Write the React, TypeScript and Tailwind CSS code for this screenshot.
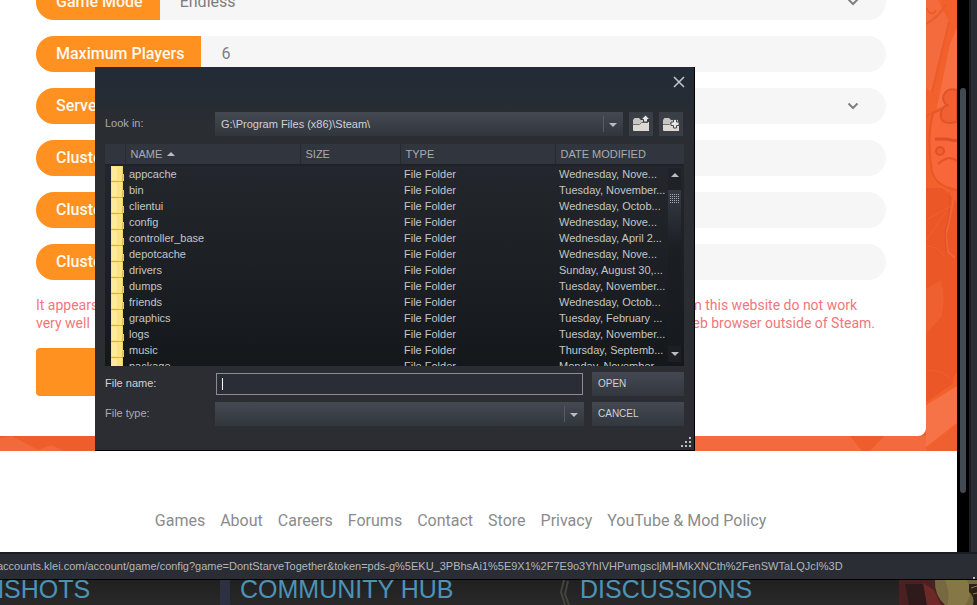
import { useId } from "react";

const files: [string, string][] = [
  ["appcache", "Wednesday, Nove..."],
  ["bin", "Tuesday, November..."],
  ["clientui", "Wednesday, Octob..."],
  ["config", "Wednesday, Nove..."],
  ["controller_base", "Wednesday, April 2..."],
  ["depotcache", "Wednesday, Nove..."],
  ["drivers", "Sunday, August 30,..."],
  ["dumps", "Tuesday, November..."],
  ["friends", "Wednesday, Octob..."],
  ["graphics", "Tuesday, February ..."],
  ["logs", "Tuesday, November..."],
  ["music", "Thursday, Septemb..."],
  ["package", "Monday, November..."],
];

const links = ["Games", "About", "Careers", "Forums", "Contact", "Store", "Privacy", "YouTube & Mod Policy"];

function Arrow({ up = false }: { up?: boolean }) {
  return (
    <svg width="8" height="4" viewBox="0 0 8 4" className="shrink-0" aria-hidden="true">
      <path d={up ? "M0 4L4 0L8 4Z" : "M0 0H8L4 4Z"} fill="#b9bcc2" />
    </svg>
  );
}

function FolderIcon() {
  return (
    <svg width="13" height="16" viewBox="0 0 13 16" className="block" aria-hidden="true">
      <path d="M0 0H12V8H13V15H12V16H0Z" fill="#f0d06c" />
      <path d="M0 0H11V15H0Z" fill="#fbe283" />
      <path d="M1 1H6V14H1Z" fill="#fdea9a" />
      <path d="M0 15.500H12" stroke="#d9b24c" fill="none" />
      <path d="M11.500 15V9" stroke="#e0bb52" fill="none" />
    </svg>
  );
}

function PanelFolder({ kind }: { kind: "up" | "new" }) {
  return (
    <svg width="20" height="20" viewBox="0 0 20 20" aria-hidden="true">
      <path d="M2 6L3.500 4H8L10 6H17V17H3L2 16Z" fill="#c9c5bf" />
      <path d="M2 10H8L10 8H18V17H3L2 16Z" fill="#dcd9d5" />
      <path d="M2 10.500H8.500L10.500 8.500H17" stroke="#776f69" fill="none" />
      {kind === "up" ? (
        <path d="M14.500 1L19 5.500H16.500V8H12.500V5.500H10Z" fill="#e6e6e6" stroke="#343a42" />
      ) : (
        <path d="M12.500 5.500H15.500V8H18V11.500H15.500V14H12.500V11.500H10V8H12.500Z" fill="#e6e6e6" stroke="#45484c" />
      )}
    </svg>
  );
}

function Field({ label, value = "", select = false }: { label: string; value?: string; select?: boolean }) {
  const id = useId();
  return (
    <div className="relative flex h-9 overflow-hidden rounded-full bg-[#f6f6f6] text-base text-[#7d7d7d]">
      <label htmlFor={id} className="flex shrink-0 items-center bg-[#ff9120] pr-[17px] pl-5 font-medium text-[#fff8ee]">
        {label}
      </label>
      {select ? (
        <>
          <select id={id} className="min-w-0 flex-1 appearance-none bg-transparent px-5 outline-none">
            <option>{value}</option>
          </select>
          <svg width="12" height="8" viewBox="0 0 12 8" className="pointer-events-none absolute top-[14px] right-[27px]" aria-hidden="true">
            <path d="M1.500 1.500L6 6L10.500 1.500" fill="none" stroke="#808080" strokeWidth="2" />
          </svg>
        </>
      ) : (
        <input id={id} defaultValue={value} className="min-w-0 flex-1 bg-transparent px-5 outline-none" />
      )}
    </div>
  );
}

function BannerArt() {
  return (
    <>
      <svg viewBox="0 0 31 451" className="absolute top-0 right-0 h-full w-[31px]" preserveAspectRatio="none" aria-hidden="true">
        <rect width="31" height="451" fill="#f2602c" />
        <path d="M0 0H12L23 22L5 92L0 88Z" fill="#f46c3d" />
        <path d="M31 28L24 44L10 112L31 150Z" fill="#f77044" />
        <path d="M0 8Q6 18 10 10M0 24Q14 16 20 4M23 22L6 92M0 116L16 108" stroke="#ec5c2b" strokeWidth="2" fill="none" />
        <path d="M0 188L16 188L31 202V372Q26 378 27 384L0 402Z" fill="#eb5726" />
        <path d="M7 113Q1 136 5 165Q6 186 31 190V120L16 111Z" fill="#f7673a" />
        <path d="M31 190Q6 186 5 165Q1 136 7 113L16 109" fill="none" stroke="#e55829" strokeWidth="2" />
        <path d="M31 90Q19 87 17 98Q18 104 21 105Q14 108 15 118Q17 125 31 122Z" fill="#f26031" stroke="#e05429" strokeWidth="2" />
        <path d="M9 139H20L31 141" stroke="#dd4f27" strokeWidth="3" fill="none" />
        <circle cx="14" cy="151" r="4" fill="#f0602f" stroke="#df5128" strokeWidth="2" />
        <path d="M12 164Q23 154 31 161" stroke="#e2552a" strokeWidth="2" fill="none" />
        <path d="M29 192Q24 218 20 235L22 252L29 258" stroke="#f26436" strokeWidth="2" fill="none" />
        <path d="M23 192Q25 218 19 230L20 252" stroke="#df5426" fill="none" />
        <path d="M0 289L15 280Q20 300 15 317L0 334Z" fill="#ee602f" />
        <path d="M0 246Q14 247 18 256M0 220L25 206M0 240L20 212M0 370Q18 370 25 380" fill="none" stroke="#ee6231" />
        <path d="M0 405L31 386V423L0 447Z" fill="#f57346" />
        <path d="M0 451L31 425V451Z" fill="#ee602f" />
      </svg>
      <svg viewBox="0 0 926 15" className="absolute bottom-0 left-0 h-[15px] w-full pr-[31px]" preserveAspectRatio="none" aria-hidden="true">
        <path d="M0 2L12 0L40 15H0ZM34 15L52 9L64 15Z" fill="#f06a3b" />
        <path d="M695 0H850L862 15H695ZM884 0H926V15H870Z" fill="#f26a3d" />
      </svg>
    </>
  );
}

function ScrollBar() {
  return (
    <div className="absolute top-6 right-[3px] bottom-1 flex w-[13px] flex-col items-center justify-between bg-[#1a1d22]/40" aria-hidden="true">
      <div className="flex h-[14px] items-center"><Arrow up /></div>
      <div className="mt-2 flex w-full flex-1 flex-col">
        <div className="flex h-14 justify-center bg-linear-to-b from-[#353a43] to-transparent pt-1">
          <svg width="9" height="9" viewBox="0 0 9 9">
            {[0, 2, 4, 6, 8].map((y) => (
              <path key={y} d={`M0 ${y + 0.5}H9`} stroke="#a5a9b0" strokeDasharray="1 1" />
            ))}
          </svg>
        </div>
      </div>
      <div className="flex h-4 w-full items-center justify-center bg-[#1c1f24]"><Arrow /></div>
    </div>
  );
}

const button = "flex h-6 items-center bg-linear-to-b from-[#434852] to-[#33373e] pb-[2px] pl-[6px] text-[10px] text-[#cfd2d6]";
const combo = "flex h-6 min-w-0 items-center bg-linear-to-b from-[#454952] to-[#31353c]";
const heading = "border-l border-[#262a30] p-0 pl-[5px] font-normal";

function FileDialog() {
  return (
    <section
      role="dialog"
      aria-label="Open file"
      className="absolute top-[67px] left-[95px] flex h-[384px] w-[600px] flex-col border-r border-b border-black bg-linear-to-b from-[#222b37] via-[#2a2d32] via-15% to-[#2b2d32] px-[10px] font-['Liberation_Sans',Arial,sans-serif] text-[11px] text-[#a9acb2]"
    >
      <div className="-mr-px flex h-[45px] shrink-0 justify-end pt-[9px]">
        <button aria-label="Close" className="h-3 w-3">
          <svg width="12" height="12" viewBox="0 0 12 12">
            <path d="M1 1L11 11M11 1L1 11" stroke="#c5c8cc" strokeWidth="1.500" />
          </svg>
        </button>
      </div>
      <div className="mr-px flex items-center">
        <label htmlFor="folder" className="w-[110px] pb-[2px]">Look in:</label>
        <div className={`${combo} flex-1 text-[#d0d2d6]`}>
          <select id="folder" className="h-6 flex-1 appearance-none bg-transparent pl-[6px] outline-none">
            <option>G:\Program Files (x86)\Steam\</option>
          </select>
          <span className="flex h-4 w-5 items-center border-l border-[#565b64] pt-px pl-[5px]"><Arrow /></span>
        </div>
        <button aria-label="Up one folder" className="ml-[6px] flex h-6 w-6 items-center justify-center bg-[#3a3f47]"><PanelFolder kind="up" /></button>
        <button aria-label="New folder" className="ml-[6px] flex h-6 w-6 items-center justify-center bg-[#3a3f47]"><PanelFolder kind="new" /></button>
      </div>
      <div className="relative mt-2 h-[222px] overflow-hidden bg-linear-to-b from-[#25282e] to-[#15181b]">
        <table className="w-full table-fixed border-collapse text-left whitespace-nowrap text-[#c3c6ca]">
          <colgroup>
            <col className="w-5" />
            <col className="w-[175px]" />
            <col className="w-[100px]" />
            <col className="w-[155px]" />
            <col />
          </colgroup>
          <thead className="bg-[#31353d] text-[#a9acb2]">
            <tr className="h-5">
              <th className="p-0" aria-label="Icon"></th>
              <th className={heading}>
                <span className="flex items-center gap-[5px]">NAME <Arrow up /></span>
              </th>
              <th className={heading}>SIZE</th>
              <th className={heading}>TYPE</th>
              <th className={heading}>DATE MODIFIED</th>
            </tr>
          </thead>
          <tbody>
            <tr className="h-[2px]"><td colSpan={5} className="bg-[#1f2227] p-0"></td></tr>
            {files.map(([name, date]) => (
              <tr key={name} className="h-4 leading-4">
                <td className="p-0 pl-[6px]"><FolderIcon /></td>
                <td className="p-0 pl-1">{name}</td>
                <td className="p-0"></td>
                <td className="p-0 pl-1">File Folder</td>
                <td className="p-0 pl-1">{date}</td>
              </tr>
            ))}
          </tbody>
        </table>
        <ScrollBar />
      </div>
      <div className="mt-[6px] grid grid-cols-[110px_1fr_92px] items-center gap-y-[6px]">
        <label htmlFor="filename" className="pb-[2px] text-[#d0d2d6]">File name:</label>
        <div className="mr-[9px] ml-px flex h-[22px] items-center border border-[#8a8d93] bg-[#2a2d36] pl-[5px]">
          <span className="h-3 w-px bg-white" />
          <input id="filename" className="h-full min-w-0 flex-1 bg-transparent outline-none" />
        </div>
        <button className={button}>OPEN</button>
        <label htmlFor="filetype" className="pb-[2px]">File type:</label>
        <div className={`${combo} mr-2`}>
          <select id="filetype" className="h-6 min-w-0 flex-1 appearance-none bg-transparent outline-none">
            <option></option>
          </select>
          <span className="flex h-4 w-5 items-center border-l border-[#565b64] pt-px pl-[5px]"><Arrow /></span>
        </div>
        <button className={button}>CANCEL</button>
      </div>
      <svg width="11" height="11" viewBox="0 0 11 11" className="absolute right-[2px] bottom-[2px]" fill="#b9bcc2" aria-hidden="true">
        <path d="M8 0h2v2h-2zM4 4h2v2h-2zM8 4h2v2h-2zM0 8h2v2h-2zM4 8h2v2h-2zM8 8h2v2h-2z" />
      </svg>
    </section>
  );
}

export default function App() {
  return (
    <div className="relative flex h-screen flex-col overflow-hidden bg-[#232323] font-[Roboto,sans-serif]">
      <div className="flex min-h-0 flex-1 bg-[#2a2d33]">
        <main className="flex flex-1 flex-col bg-white">
          <div className="relative shrink-0 bg-[#ee5d2c] pb-[15px]">
            <BannerArt />
            <form className="relative mr-[31px] rounded-br-lg bg-white pr-10 pb-10 pl-9">
              <div className="-mt-4 flex flex-col gap-4">
                <Field label="Game Mode" value="Endless" select />
                <Field label="Maximum Players" value="6" />
                <Field label="Server" select />
                <Field label="Cluster" />
                <Field label="Cluster" />
                <Field label="Cluster" />
              </div>
              <div className="mt-4 mb-4 text-[14px] leading-[18px] text-[#f0777b]">
                <p className="mr-[29px] flex justify-between"><span>It appears</span><span>from this website do not work</span></p>
                <p className="mr-[11px] flex justify-between"><span>very well</span><span>web browser outside of Steam.</span></p>
              </div>
              <button aria-label="Submit" className="block h-12 w-full max-w-96 rounded bg-[#ff9120]" />
            </form>
          </div>
          <footer className="flex flex-1 items-center justify-center pt-[39px] pr-9 text-base text-[#8b8b8b]">
            <nav className="flex gap-[15px]">
              {links.map((l) => <a key={l} href="#">{l}</a>)}
            </nav>
          </footer>
        </main>
        <div className="w-3 bg-black px-[3px] pt-[88px]" aria-hidden="true">
          <div className="h-[405px] rounded-full bg-[#424952]" />
        </div>
        <div className="w-2 border-l-2 border-[#1c1e22]" />
      </div>
      <div className="flex h-7 shrink-0 items-center justify-between border-t-2 border-b border-t-[#1b1d20] border-b-black bg-[#2a2d33] font-['Liberation_Sans',Arial,sans-serif] text-[11px] text-[#b3b6bb]">
        <span className="-ml-[3px]">accounts.klei.com/account/game/config?game=DontStarveTogether&amp;token=pds-g%5EKU_3PBhsAi1%5E9X1%2F7E9o3YhIVHPumgscljMHMkXNCth%2FenSWTaLQJcI%3D</span>
        <span className="mr-[2px] h-[2px] w-[2px] self-end bg-[#b9bcc2]" />
      </div>
      <nav className="relative flex h-[25px] shrink-0 overflow-hidden bg-linear-to-b from-[#202020] to-[#292929] font-['Liberation_Sans',Arial,sans-serif] text-[25px] leading-[19px] text-[#4c93b8]">
        <a href="#" className="flex w-[220px] shrink-0 justify-start"><span className="-ml-[14px]">NSHOTS</span></a>
        <span className="w-[10px] shrink-0 bg-[#2c3040]" />
        <a href="#" className="w-[330px] shrink-0 pl-[10px]">COMMUNITY HUB</a>
        <svg width="10" height="25" viewBox="0 0 10 25" className="shrink-0" aria-hidden="true">
          <path d="M4 0L1 12L5 25M8 1L5 14L9 25" stroke="#44443f" strokeWidth="2" fill="none" />
        </svg>
        <a href="#" className="flex-1 pl-[10px]">DISCUSSIONS</a>
        <svg width="78" height="25" viewBox="0 0 78 25" className="shrink-0" aria-hidden="true">
          <rect width="78" height="25" fill="#4c2022" />
          <path d="M6 4H26L32 25H10Z" fill="#2f1a1b" />
          <path d="M24 3L35 10L42 25H28Z" fill="#6d2828" />
          <path d="M36 0H78V25H46Q35 15 36 0Z" fill="#77693f" />
          <path d="M46 0Q52 14 48 25H66Q75 14 68 0Z" fill="#857746" />
          <path d="M70 4H78V25H74Q76 16 70 12Z" fill="#2a2018" />
          <path d="M72 8L78 6M74 14L78 13" stroke="#98794d" />
        </svg>
      </nav>
      <FileDialog />
    </div>
  );
}
